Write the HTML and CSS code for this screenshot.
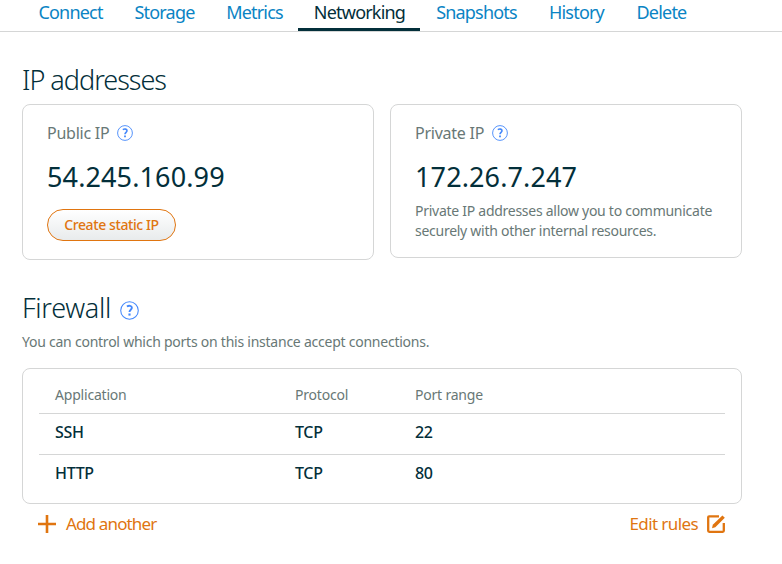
FILE: index.html
```html
<!DOCTYPE html>
<html lang="en">
<head>
<meta charset="utf-8">
<title>Networking</title>
<link rel="stylesheet" href="styles.css">
</head>
<body>
<svg class="defs" aria-hidden="true">
  <symbol id="help" viewBox="0 0 16 16">
    <circle cx="8" cy="8" r="7.4" fill="none" stroke="#4488fb" stroke-width=".9"/>
    <path d="M5.8 4.6C7.5 3.6 10 3.9 10 5.7C10 7.3 8 7.5 8 9.3" fill="none" stroke="#4488fb" stroke-width="1.6"/>
    <path d="M7.1 10.5h1.8v1.8H7.1z" fill="#4488fb"/>
  </symbol>
</svg>
<nav class="tabs">
  <a class="tab connect">Connect</a>
  <a class="tab storage">Storage</a>
  <a class="tab metrics">Metrics</a>
  <a class="tab networking active">Networking</a>
  <a class="tab snapshots">Snapshots</a>
  <a class="tab history">History</a>
  <a class="tab delete">Delete</a>
</nav>
<main>
  <h1 class="title-ip">IP addresses</h1>
  <section class="cards">
    <article class="card public">
      <div class="label"><span>Public IP</span><svg class="help"><use href="#help"/></svg></div>
      <div class="ip">54.245.160.99</div>
      <button class="static">Create static IP</button>
    </article>
    <article class="card private">
      <div class="label"><span>Private IP</span><svg class="help"><use href="#help"/></svg></div>
      <div class="ip">172.26.7.247</div>
      <p class="note">Private IP addresses allow you to communicate<br><span class="note-end">securely with other internal resources.</span></p>
    </article>
  </section>
  <div class="firewall"><h1>Firewall</h1><svg class="help large"><use href="#help"/></svg></div>
  <p class="intro">You can control which ports on this instance accept connections.</p>
  <section class="rules">
    <div class="row head"><span>Application</span><span>Protocol</span><span>Port range</span></div>
    <div class="row"><span>SSH</span><span>TCP</span><span>22</span></div>
    <div class="row"><span>HTTP</span><span>TCP</span><span>80</span></div>
  </section>
  <footer class="actions">
    <a class="action add"><svg class="plus" viewBox="0 0 18 18"><path d="M9 0v18M0 9h18" stroke="currentColor" stroke-width="2.6"/></svg><span>Add another</span></a>
    <a class="action edit"><span>Edit rules</span><svg class="pencil" viewBox="0 0 18 18"><path d="M12 1.3H2.1Q1.2 1.3 1.2 2.2V15.8Q1.2 16.8 2.2 16.8H15.8Q16.8 16.8 16.8 15.8V8" fill="none" stroke="currentColor" stroke-width="2.3"/><path d="M5 13.2L5.8 9.7L15.4.4L17.8 2.8L8.3 12.3Z" fill="currentColor"/></svg></a>
  </footer>
</main>
</body>
</html>
```

FILE: styles.css
```css
* { box-sizing: border-box; }
body { margin: 0; background: #fff; color: #032f3a; font-family: "Noto Sans", sans-serif; }
.defs { display: none; }
h1, p { margin: 0; }
h1, span, a, .ip { white-space: nowrap; }

.tabs { display: flex; height: 32px; padding-left: 22px; border-bottom: 1px solid #d5d6d6; }
.tab { display: flex; justify-content: center; height: 31px; padding-left: 1px; font-size: 18px; line-height: 24px; color: #0a84c4; letter-spacing: -.8px; }
.connect { width: 96px; }
.storage { width: 92px; }
.metrics { width: 88px; }
.networking { width: 122px; }
.snapshots { width: 112px; }
.history { width: 88px; }
.delete { width: 82px; }
.active { color: #032f3a; border-bottom: 3px solid #032f3a; }

main { width: 742px; padding-left: 22px; padding-top: 30px; }
h1 { font-size: 27px; font-weight: 300; line-height: 36px; letter-spacing: -1px; }
.firewall h1 { letter-spacing: -.3px; }
.cards { display: flex; align-items: flex-start; gap: 16px; margin-top: 6px; }
.card { width: 352px; height: 156px; padding: 16px 24px; border: 1px solid #d5d6d6; border-radius: 8px; }
.private { height: 154px; }
.label { display: flex; align-items: center; gap: 8px; height: 24px; font-size: 16px; color: #687876; letter-spacing: -.24px; }
.help { width: 16px; height: 16px; }
.ip { margin-top: 13px; font-size: 27px; line-height: 38px; letter-spacing: .12px; }
.static { display: block; width: 129px; height: 32px; margin-top: 13px; padding: 0; border: 1px solid #e07510; border-radius: 16px; background: linear-gradient(#fff, #e8ebec); color: #e07510; font: 500 14px/28px "Noto Sans", sans-serif; letter-spacing: -.4px; }
.note { margin-top: 5px; font-size: 14px; line-height: 20px; color: #687876; white-space: nowrap; letter-spacing: -.27px; }

.firewall { display: flex; align-items: center; gap: 9px; height: 36px; margin-top: 30px; }
.large { width: 19px; height: 19px; margin-top: 4px; }
.intro { margin-top: 6px; font-size: 14px; line-height: 20px; color: #687876; letter-spacing: -.24px; }
.rules { height: 136px; margin-top: 16px; padding: 8px 16px; border: 1px solid #d5d6d6; border-radius: 8px; }
.row { display: grid; grid-template-columns: 240px 120px 1fr; height: 41px; padding-left: 16px; border-bottom: 1px solid #d5d6d6; font-size: 16px; line-height: 36px; letter-spacing: -.3px; font-weight: 500; }
.head { height: 37px; font-size: 14px; line-height: 36px; color: #687876; letter-spacing: -.2px; font-weight: 400; }
.row:last-child { border-bottom: 0; }
.actions { display: flex; justify-content: space-between; height: 40px; padding: 0 17px 0 16px; color: #e07510; font-size: 17px; }
.action { display: flex; align-items: center; letter-spacing: -.7px; }
.action span { padding-bottom: 2px; }
.add { gap: 10px; letter-spacing: -.85px; }
.edit { gap: 9px; letter-spacing: -.6px; }
.plus, .pencil { width: 18px; height: 18px; }
```
